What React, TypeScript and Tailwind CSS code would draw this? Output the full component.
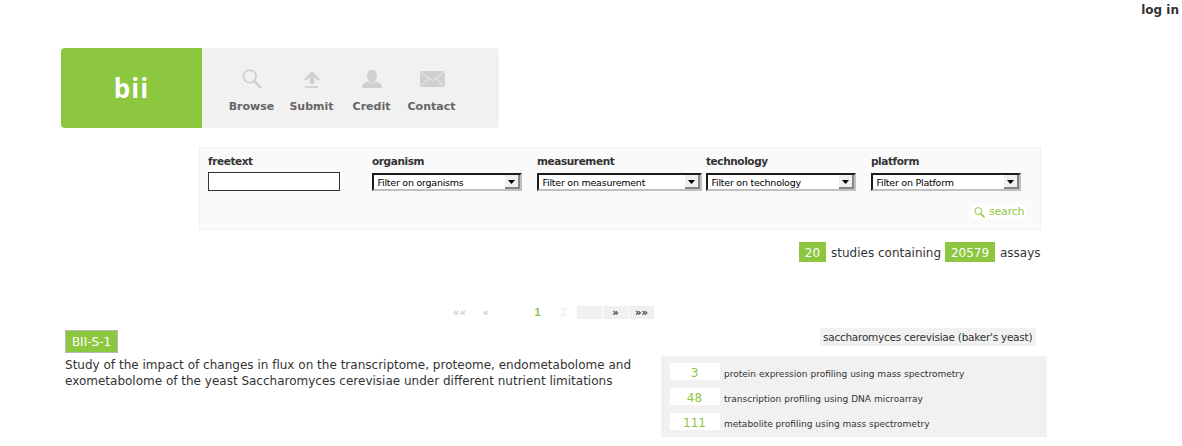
import type { ReactNode } from "react";

function SearchIcon({ className }: { className: string }) {
  return (
    <svg className={className} viewBox="0 0 20 20" fill="none" stroke="currentColor">
      <circle cx="7.8" cy="7.4" r="6.3" strokeWidth="1.8" />
      <path d="M12.3 12.2 18.2 18" strokeWidth="2.8" strokeLinecap="round" />
    </svg>
  );
}

function SubmitIcon() {
  return (
    <svg className="h-[17px] w-4" viewBox="0 0 16 17" fill="currentColor">
      <path d="M8 0 16 8 14.3 9.4 10.3 6.5V13H5.7V6.5L1.7 9.4 0 8Z" />
      <path d="M1.2 15.2H14V17H1.2Z" />
    </svg>
  );
}

function PersonIcon() {
  return (
    <svg className="h-[18px] w-5" viewBox="0 0 20 18" fill="currentColor">
      <path d="M10 0C13.2 0 15 2 15 5.5S13 13 10 13 5 9 5 5.5 6.8 0 10 0Z" />
      <path d="M0 18C0 14.5 1.5 13.5 5.8 11.6Q10 15.8 14.2 11.6C18.5 13.5 20 14.5 20 18Z" />
    </svg>
  );
}

function MailIcon() {
  return (
    <svg className="h-4 w-[25px]" viewBox="0 0 25 16" fill="none">
      <rect width="25" height="16" fill="currentColor" />
      <path d="M0 .5 12.5 9.5 25 .5M.5 15.5 9.5 7.5M24.5 15.5 15.5 7.5" stroke="#f1f1f1" strokeWidth=".9" />
    </svg>
  );
}

function NavItem({ icon, label }: { icon: ReactNode; label: string }) {
  return (
    <a className="flex w-[60px] flex-col items-center">
      <span className="flex h-5 items-center text-[#d0d0d0]">{icon}</span>
      <span className="mt-[11px] mr-px text-[11px] leading-[14px] font-bold whitespace-nowrap text-[#666]">{label}</span>
    </a>
  );
}

function Field({ label, className, children }: { label: string; className: string; children: ReactNode }) {
  return (
    <div className={`flex shrink-0 flex-col ${className}`}>
      <span className="h-[18px] text-[10.5px] leading-[14px] font-bold tracking-[-0.4px] whitespace-nowrap">{label}</span>
      {children}
    </div>
  );
}

function Select({ text, className }: { text: string; className: string }) {
  return (
    <div className={`mt-px flex h-[18px] items-center justify-between border-2 border-t-[#1c1c1c] border-r-[#c0c0c0] border-b-[#c0c0c0] border-l-[#1c1c1c] bg-white pl-[3.5px] text-black ${className}`}>
      <span className="pt-0.5 text-[9.5px] leading-[14px] tracking-[-0.24px] whitespace-nowrap">{text}</span>
      <span className="flex h-3.5 w-[15px] items-center justify-center border-r-2 border-b-2 border-[#858585] bg-[#f0f0f0] pt-0.5">
        <svg className="h-1 w-[7px]" viewBox="0 0 7 4">
          <path d="M0 0H7L3.5 4Z" fill="black" />
        </svg>
      </span>
    </div>
  );
}

function Assay({ count, text }: { count: string; text: string }) {
  return (
    <div className="flex h-[17px] items-center">
      <span className="h-[17px] w-[50px] bg-white pr-px text-center text-[12px] leading-[20px] text-[#8dc63f]">{count}</span>
      <span className="ml-1 pt-1 text-[9.02px] leading-[14px] whitespace-nowrap">{text}</span>
    </div>
  );
}

export default function App() {
  return (
    <main className="h-[446px] w-[1182px] overflow-hidden bg-white font-['DejaVu_Sans',Verdana,sans-serif] text-[#333]">
      <div className="flex h-12 justify-end pr-[3px]">
        <a className="pt-[2px] text-[12px] leading-4 font-bold">log in</a>
      </div>

      <header className="ml-[61px] flex h-20 w-[438px] overflow-hidden rounded-[4px] bg-[#f1f1f1]">
        <div className="flex w-[141px] items-center justify-center bg-[#8dc63f] font-['Open_Sans',sans-serif] text-[26px] font-bold tracking-[1px] text-white">
          bii
        </div>
        <nav className="flex pt-[21px] pl-5">
          <NavItem icon={<SearchIcon className="h-5 w-5" />} label="Browse" />
          <NavItem icon={<SubmitIcon />} label="Submit" />
          <NavItem icon={<PersonIcon />} label="Credit" />
          <NavItem icon={<MailIcon />} label="Contact" />
        </nav>
      </header>

      <section className="mt-[19px] ml-[199px] h-[83px] w-[842px] border border-[#f1f1f1] bg-[#fafafa] pt-1.5 pl-2">
        <div className="flex">
          <Field label="freetext" className="w-[164px]">
            <input className="h-[19px] w-[132px] border border-[#333] bg-white" />
          </Field>
          <Field label="organism" className="w-[165px]">
            <Select text="Filter on organisms" className="w-[150px]" />
          </Field>
          <Field label="measurement" className="w-[169px]">
            <Select text="Filter on measurement" className="w-[165px]" />
          </Field>
          <Field label="technology" className="w-[165px]">
            <Select text="Filter on technology" className="w-[150px]" />
          </Field>
          <Field label="platform" className="w-[150px]">
            <Select text="Filter on Platform" className="w-[150px]" />
          </Field>
        </div>
        <div className="mt-3.5 flex justify-end pr-3.5">
          <button className="flex h-3.5 w-[55px] items-center bg-white pl-[3px] text-[11px] leading-3.5 text-[#8dc63f]">
            <SearchIcon className="mr-1 h-[11px] w-[11px] shrink-0" />
            <span className="tracking-[-0.2px]">search</span>
          </button>
        </div>
      </section>

      <div className="mt-3 mr-[142px] flex h-5 justify-end text-[12px] leading-[22px] whitespace-nowrap">
        <span className="w-[27px] bg-[#8dc63f] text-center text-white">20</span>
        <span className="ml-[5px] w-[114px]">studies containing</span>
        <span className="w-[50px] bg-[#8dc63f] text-center text-white">20579</span>
        <span className="ml-[5px] w-10">assays</span>
      </div>

      <div className="mt-11 ml-[447px] flex h-[13px] gap-px text-center text-[10px] leading-[13px] font-bold">
        <span className="w-[25px] text-[#ccc]">««</span>
        <span className="w-[25px] text-[#ccc]">«</span>
        <span className="w-[25px]" />
        <span className="w-[25px] font-['Liberation_Sans',sans-serif] text-[11px] text-[#8dc63f]">1</span>
        <span className="w-[25px] font-['Liberation_Sans',sans-serif] text-[11px] font-normal text-[#e8e8e8]">2</span>
        <span className="w-[25px] bg-[#f0f0f0]" />
        <span className="w-[25px] bg-[#f0f0f0]">»</span>
        <span className="w-[25px] bg-[#f0f0f0]">»»</span>
      </div>

      <section className="flex pt-[9px] pl-[65px]">
        <div className="w-[596px] shrink-0 pt-0.5">
          <a className="flex h-[23px] w-[53px] items-center justify-center border border-[#b8b8b8] bg-[#8dc63f] pt-px text-[12px] whitespace-nowrap text-white">
            BII-S-1
          </a>
          <p className="mt-1 text-[12px] leading-4 whitespace-nowrap">
            <span className="block tracking-[0.01px]">Study of the impact of changes in flux on the transcriptome, proteome, endometabolome and</span>
            <span className="block">exometabolome of the yeast Saccharomyces cerevisiae under different nutrient limitations</span>
          </p>
        </div>
        <div className="flex w-[386px] flex-col">
          <span className="mr-[11px] h-[18px] w-[216px] self-end bg-[#f1f1f1] pl-[3px] text-[10.5px] leading-[19px] tracking-[-0.25px] whitespace-nowrap">
            saccharomyces cerevisiae (baker&apos;s yeast)
          </span>
          <div className="mt-2.5 flex h-[81px] flex-col gap-2 bg-[#f1f1f1] pt-[7px] pl-[9px]">
            <Assay count="3" text="protein expression profiling using mass spectrometry" />
            <Assay count="48" text="transcription profiling using DNA microarray" />
            <Assay count="111" text="metabolite profiling using mass spectrometry" />
          </div>
        </div>
      </section>
    </main>
  );
}
